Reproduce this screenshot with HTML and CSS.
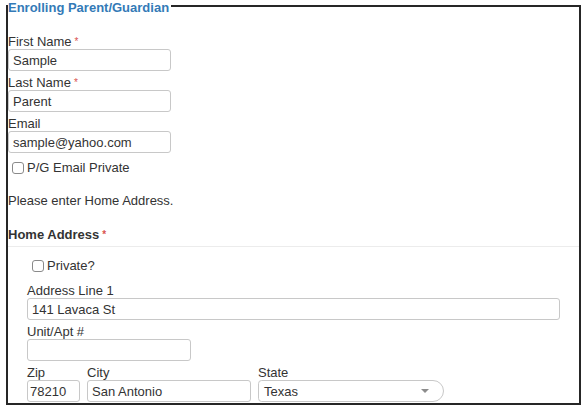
FILE: index.html
```html
<!DOCTYPE html>
<html lang="en">
<head>
    <meta charset="UTF-8">
    <title>Enrolling Parent/Guardian</title>
    <link rel="stylesheet" href="styles.css">
</head>
<body>
    <div class="frame">
        <div class="title">Enrolling Parent/Guardian</div>

        <div class="field first">
            <div class="label">First Name<span class="req">*</span></div>
            <input class="box w-name" type="text" value="Sample">
        </div>
        <div class="field">
            <div class="label">Last Name<span class="req">*</span></div>
            <input class="box w-name" type="text" value="Parent">
        </div>
        <div class="field">
            <div class="label">Email</div>
            <input class="box w-name" type="text" value="sample@yahoo.com">
        </div>

        <div class="check-row email-private">
            <span class="check"></span>
            <span>P/G Email Private</span>
        </div>

        <div class="note">Please enter Home Address.</div>
        <div class="section-head">Home Address<span class="req">*</span></div>

        <div class="address">
            <div class="check-row private">
                <span class="check"></span>
                <span>Private?</span>
            </div>
            <div class="field addr1">
                <div class="label">Address Line 1</div>
                <input class="box w-line" type="text" value="141 Lavaca St">
            </div>
            <div class="field">
                <div class="label">Unit/Apt #</div>
                <input class="box w-unit" type="text" value="">
            </div>
            <div class="field-row">
                <div>
                    <div class="label">Zip</div>
                    <input class="box w-zip" type="text" value="78210">
                </div>
                <div>
                    <div class="label">City</div>
                    <input class="box w-city" type="text" value="San Antonio">
                </div>
                <div>
                    <div class="label">State</div>
                    <div class="box select">
                        <span>Texas</span>
                        <span class="arrow"></span>
                    </div>
                </div>
            </div>
        </div>
    </div>
</body>
</html>
```

FILE: styles.css
```css
body {
    margin: 0;
    font-family: "Liberation Sans", Arial, sans-serif;
    font-size: 13px;
    color: #333;
    background: #fff;
}

.frame {
    box-sizing: border-box;
    width: 575px;
    height: 400px;
    margin: 5px 0 0 6px;
    border: 2px solid #262626;
}

/* heading sits over the top border */
.title {
    width: fit-content;
    margin-top: -6px;
    padding-right: 2px;
    line-height: 14px;
    font-weight: bold;
    color: #337ab7;
    background: #fff;
}

.label {
    line-height: 14px;
}

.req {
    color: #d9534f;
    font-size: 10px;
    vertical-align: top;
    margin-left: 3px;
}

.field {
    margin-top: 5px;
}

.field.first {
    margin-top: 20px;
}

.box {
    display: block;
    box-sizing: border-box;
    height: 22px;
    margin: 0;
    padding: 0 4px;
    border: 1px solid #c8c8c8;
    border-radius: 3px;
    font-family: inherit;
    font-size: 13px;
    color: #333;
    background: #fff;
    outline: none;
}

.w-name { width: 163px; }
.w-line { width: 533px; }
.w-unit { width: 164px; }
.w-zip  { width: 53px; padding: 0 2px; }
.w-city { width: 164px; }

/* checkboxes */
.check-row {
    display: flex;
    align-items: center;
    gap: 3px;
    height: 14px;
    line-height: 14px;
}

.check {
    box-sizing: border-box;
    width: 12px;
    height: 12px;
    border: 1px solid #8a8a8a;
    border-radius: 3px;
    background: #fff;
}

.email-private {
    margin-top: 8px;
    padding-left: 4px;
}

.note {
    margin-top: 19px;
    line-height: 14px;
}

.section-head {
    margin-top: 20px;
    line-height: 14px;
    font-weight: bold;
    padding-bottom: 4px;
    border-bottom: 1px solid #ececec;
}

/* home address block */
.address {
    padding-left: 19px;
}

.private {
    margin-top: 12px;
    padding-left: 5px;
}

.field.addr1 {
    margin-top: 11px;
}

.field-row {
    display: flex;
    gap: 7px;
    margin-top: 5px;
}

.select {
    display: flex;
    align-items: center;
    justify-content: space-between;
    width: 186px;
    padding: 0 12px 0 5px;
    border-radius: 4px 12px 12px 4px;
}

.arrow {
    width: 0;
    height: 0;
    border-left: 4px solid transparent;
    border-right: 4px solid transparent;
    border-top: 4px solid #8c8c8c;
    margin-right: 2px;
}
```
